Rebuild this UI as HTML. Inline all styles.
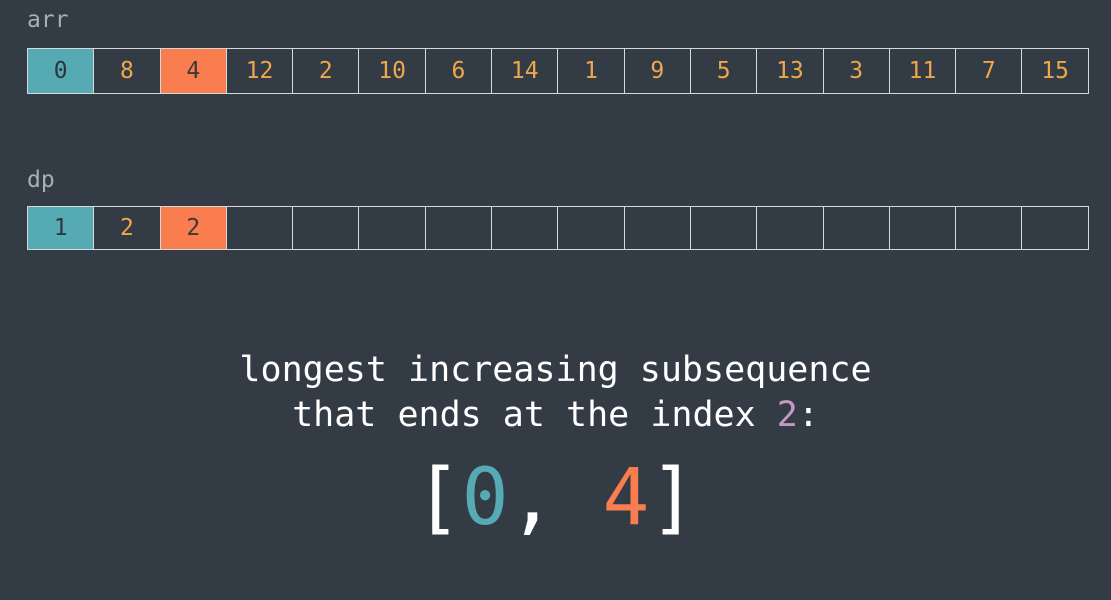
<!DOCTYPE html>
<html><head><style>
body{margin:0;width:1111px;height:600px;background:#333b45;overflow:hidden;font-family:"DejaVu Sans Mono","Liberation Mono",monospace;position:relative}
.lbl{position:absolute;left:27px;color:#a9aeb5;font-size:23px}
.row{position:absolute;left:27px;display:flex;border:1px solid #d6d9dc;border-right:none}
.row div{width:66.3px;flex:none;border-right:1px solid #d6d9dc;box-sizing:border-box;color:#f0a64a;font-size:23px;text-align:center}
.t{background:#56aab3;color:#2d3640 !important}
.o{background:#f97d4e;color:#3a3a3a !important}
.txt{position:absolute;left:0;width:1111px;text-align:center;color:#fff;white-space:pre;font-family:"DejaVu Sans Mono",monospace}
</style></head><body>
<div class="lbl" style="top:7px">arr</div>
<div class="row" style="top:48px;height:44px;line-height:44px"><div class="t">0</div><div>8</div><div class="o">4</div><div>12</div><div>2</div><div>10</div><div>6</div><div>14</div><div>1</div><div>9</div><div>5</div><div>13</div><div>3</div><div>11</div><div>7</div><div>15</div></div>
<div class="lbl" style="top:167px">dp</div>
<div class="row" style="top:206px;height:42px;line-height:42px"><div class="t">1</div><div>2</div><div class="o">2</div><div></div><div></div><div></div><div></div><div></div><div></div><div></div><div></div><div></div><div></div><div></div><div></div><div></div></div>
<div class="txt" style="top:348px;font-size:35px;line-height:45px">longest increasing subsequence
that ends at the index <span style="color:#c49ac4">2</span>:</div>
<div class="txt" style="top:450px;font-size:78px;line-height:96px">[<span style="color:#56aab3">0</span>, <span style="color:#f97d4e">4</span>]</div>
</body></html>
